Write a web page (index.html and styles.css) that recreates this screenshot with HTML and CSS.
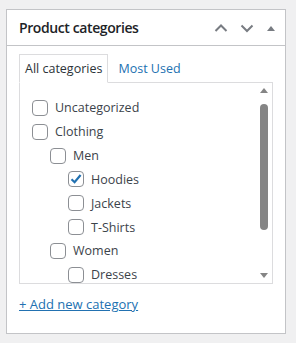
FILE: index.html
```html
<!DOCTYPE html>
<html>
<head>
<meta charset="utf-8">
<link rel="stylesheet" href="styles.css">
</head>
<body>
<div class="panel">
  <div class="head">
    <h2 class="title">Product categories</h2>
    <div class="actions">
      <svg class="chev" width="16" height="16" viewBox="0 0 16 16"><path d="M2.5 11 L8 5.5 L13.5 11" fill="none" stroke="#787c82" stroke-width="2"/></svg>
      <svg class="chev" width="16" height="16" viewBox="0 0 16 16"><path d="M2.5 5.5 L8 11 L13.5 5.5" fill="none" stroke="#787c82" stroke-width="2"/></svg>
      <svg class="tri" width="10" height="10" viewBox="0 0 10 10"><path d="M1 8 L5 3 L9 8 Z" fill="#787c82"/></svg>
    </div>
  </div>
  <div class="inside">
    <div class="tabs">
      <span class="tab active">All categories</span>
      <a class="tab link">Most Used</a>
    </div>
    <div class="box">
      <ul class="list">
        <li class="row"><span class="cb"></span>Uncategorized</li>
        <li class="row"><span class="cb"></span>Clothing</li>
        <li class="row l1"><span class="cb"></span>Men</li>
        <li class="row l2"><span class="cb checked"><svg width="14" height="14" viewBox="0 0 14 14"><path d="M2.5 7.2 L5.6 10.2 L11.6 3" fill="none" stroke="#2271b1" stroke-width="2.2"/></svg></span>Hoodies</li>
        <li class="row l2"><span class="cb"></span>Jackets</li>
        <li class="row l2"><span class="cb"></span>T-Shirts</li>
        <li class="row l1"><span class="cb"></span>Women</li>
        <li class="row l2"><span class="cb"></span>Dresses</li>
      </ul>
      <div class="scrollbar">
        <svg width="10" height="8" viewBox="0 0 10 8"><path d="M1 7 L5 2 L9 7 Z" fill="#858585"/></svg>
        <div class="track"><div class="thumb"></div></div>
        <svg width="10" height="8" viewBox="0 0 10 8"><path d="M1 1 L5 6 L9 1 Z" fill="#858585"/></svg>
      </div>
    </div>
    <a class="add">+ Add new category</a>
  </div>
</div>
</body>
</html>
```
FILE: styles.css
```css
html, body {
  margin: 0;
  padding: 0;
  background: #f0f0f1;
  font-family: "Open Sans", "Noto Sans", sans-serif;
}
body {
  padding: 9px 0 0 6px;
}
.panel {
  width: 278px;
  height: 323px;
  background: #fff;
  border: 1px solid #c3c4c7;
}
.head {
  height: 35px;
  border-bottom: 1px solid #c3c4c7;
  display: flex;
  align-items: center;
  justify-content: space-between;
}
.title {
  margin: 0 0 0 12px;
  font-size: 14px;
  font-weight: 600;
  color: #1d2327;
  letter-spacing: -0.4px;
}
.actions {
  display: flex;
  align-items: center;
  gap: 10px;
  margin-right: 9px;
}
.tri {
  margin-left: 1px;
}
.inside {
  padding: 8px 12px 0 12px;
}
.tabs {
  display: flex;
  align-items: flex-end;
  height: 28px;
  font-size: 12.5px;
}
.tab {
  display: block;
  padding: 0 5px;
  line-height: 27px;
}
.tab.active {
  border: 1px solid #dcdcde;
  border-bottom: 1px solid #fff;
  color: #2c3338;
  position: relative;
  z-index: 1;
  margin-bottom: -1px;
  height: 27px;
}
.tab.link {
  color: #2271b1;
  margin-left: 5px;
}
.box {
  border: 1px solid #dcdcde;
  height: 200px;
  display: flex;
  overflow: hidden;
}
.list {
  list-style: none;
  margin: 0;
  padding: 13px 0 0 12px;
  flex: 1;
  overflow: hidden;
}
.row {
  height: 23.85px;
  display: flex;
  align-items: center;
  font-size: 12.5px;
  color: #3c434a;
}
.row.l1 { padding-left: 18px; }
.row.l2 { padding-left: 36px; }
.cb {
  width: 14px;
  height: 14px;
  border: 1px solid #8c8f94;
  border-radius: 4px;
  margin-right: 7px;
  display: flex;
  align-items: center;
  justify-content: center;
  flex: none;
}
.scrollbar {
  width: 17px;
  display: flex;
  flex-direction: column;
  align-items: center;
  padding: 3px 0 3px 0;
}
.scrollbar svg {
  flex: none;
}
.track {
  flex: 1;
  width: 100%;
  display: flex;
  justify-content: center;
  padding-top: 10px;
}
.thumb {
  width: 8px;
  height: 126px;
  background: #858585;
  border-radius: 4px;
}
.add {
  display: inline-block;
  margin-top: 10px;
  font-size: 13px;
  color: #2271b1;
  text-decoration: underline;
  line-height: 20px;
}
```
